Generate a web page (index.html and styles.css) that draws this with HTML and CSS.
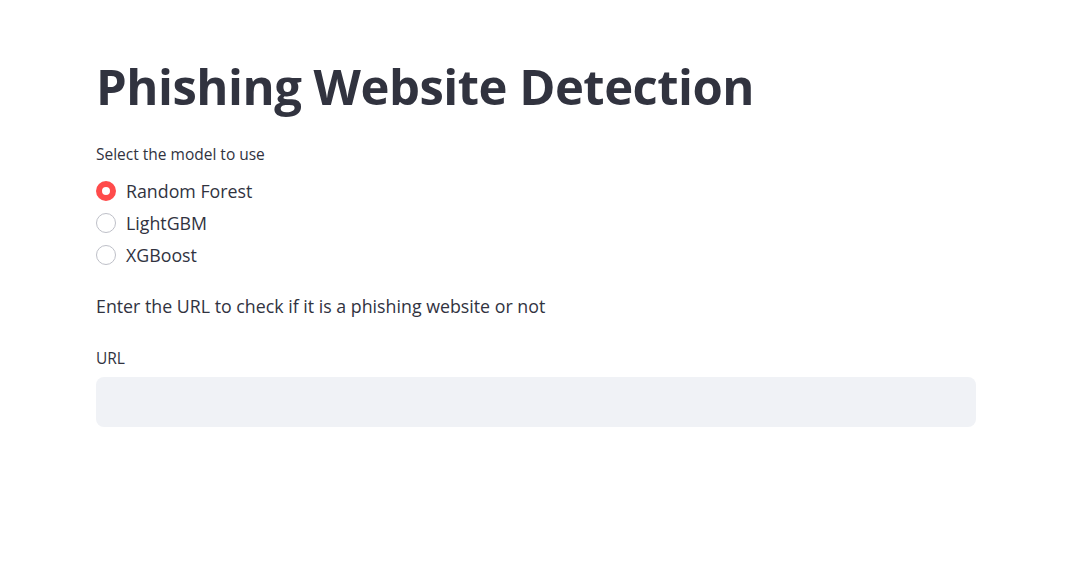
FILE: index.html
```html
<!DOCTYPE html>
<html>
<head>
<meta charset="utf-8">
<link rel="stylesheet" href="styles.css">
</head>
<body>
<main class="main">
  <h1 class="title">Phishing Website Detection</h1>
  <div class="radio-group">
    <div class="widget-label">Select the model to use</div>
    <div class="radio-options">
      <label class="radio"><span class="dot checked"></span><span class="radio-text">Random Forest</span></label>
      <label class="radio"><span class="dot"></span><span class="radio-text">LightGBM</span></label>
      <label class="radio"><span class="dot"></span><span class="radio-text">XGBoost</span></label>
    </div>
  </div>
  <p class="para">Enter the URL to check if it is a phishing website or not</p>
  <div class="text-input">
    <div class="widget-label">URL</div>
    <div class="input-box"></div>
  </div>
</main>
</body>
</html>
```
FILE: styles.css
```css
html, body {
  margin: 0;
  padding: 0;
  background: #ffffff;
}
body {
  font-family: "Open Sans", "Noto Sans", sans-serif;
  color: rgb(49, 51, 63);
}
.main {
  width: 880px;
  padding: 56px 0 0 96px;
  display: flex;
  flex-direction: column;
}
.title {
  margin: 0;
  font-size: 49px;
  font-weight: 700;
  line-height: 60px;
  letter-spacing: -0.5px;
  color: rgb(49, 51, 63);
}
.radio-group {
  margin-top: 28px;
}
.widget-label {
  font-size: 15.5px;
  line-height: 20px;
}
.radio-options {
  margin-top: 11px;
  display: flex;
  flex-direction: column;
}
.radio {
  display: flex;
  align-items: center;
  height: 32px;
}
.dot {
  box-sizing: border-box;
  width: 20px;
  height: 20px;
  border-radius: 50%;
  border: 1px solid rgb(190, 192, 200);
  background: #fff;
  margin-right: 10px;
}
.dot.checked {
  border: 6px solid #ff4b4b;
  background: #fff;
}
.radio-text {
  font-size: 17.8px;
}
.para {
  margin: 22px 0 0 0;
  font-size: 17.8px;
  line-height: 26px;
}
.text-input {
  margin-top: 29px;
}
.input-box {
  margin-top: 9px;
  height: 50px;
  border-radius: 8px;
  background: #f0f2f6;
}
```
